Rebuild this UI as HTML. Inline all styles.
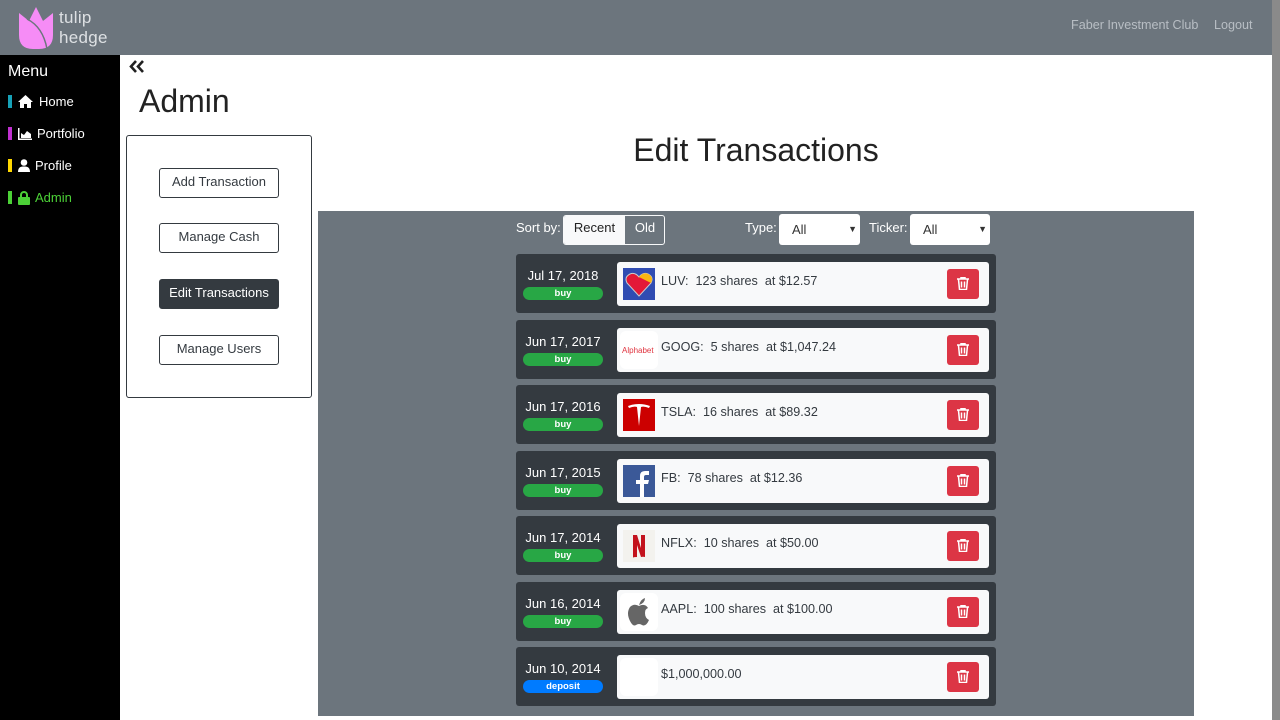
<!DOCTYPE html>
<html><head><style>
*{box-sizing:border-box;margin:0;padding:0}
body{width:1280px;height:720px;overflow:hidden;font-family:"Liberation Sans",sans-serif;background:#fff;position:relative}
.a{position:absolute}
#hdr{left:0;top:0;width:1272px;height:55px;background:#6c757d}
#sb{left:1272px;top:0;width:8px;height:720px;background:#8a8a8a}
#side{left:0;top:55px;width:120px;height:665px;background:#000}
.nav{position:absolute;left:8px;font-size:13px;color:#fff;display:flex;align-items:center}
.nav .bar{width:4px;height:13px;margin-right:6px}
.btn{position:absolute;left:159px;width:120px;height:30px;border:1px solid #343a40;border-radius:3px;font-size:13px;color:#343a40;text-align:center;line-height:26px}
.row{position:absolute;left:516px;width:480px;height:59px;background:#343a40;border-radius:3px}
.date{position:absolute;left:7px;width:80px;top:14px;text-align:center;color:#fff;font-size:13px}
.badge{position:absolute;left:7px;width:80px;top:33px;height:13px;border-radius:7px;background:#28a745;color:#fff;font-size:9.5px;font-weight:bold;text-align:center;line-height:13px}
.card{position:absolute;left:101px;top:8px;width:372px;height:44px;background:#f8f9fa;border-radius:3px}
.logo{position:absolute;left:3px;top:3px;width:38px;height:38px;background:#fff;border-radius:6px;overflow:hidden}
.txt{position:absolute;left:44px;top:12px;font-size:12.6px;color:#343a40;white-space:pre}
.del{position:absolute;left:330px;top:7px;width:32px;height:30px;background:#dc3545;border-radius:3px}
.del svg{position:absolute;left:10px;top:8px}
</style></head><body>
<div class="a" id="hdr"></div>
<div class="a" id="sb"></div>
<svg class="a" style="left:17px;top:5px" width="38" height="45" viewBox="0 0 38 45">
<path d="M2 8 L12 16 L19 2 L26 16 L36 8 L36 30 Q36 44 22 44 L16 44 Q2 44 2 30 Z" fill="#f68cf6"/>
<path d="M10 14 Q26 22 30 44" stroke="#6c757d" stroke-width="1.5" fill="none"/>
</svg>
<div class="a" style="left:59px;top:8px;font-size:17px;color:#dde0e3;line-height:20px;letter-spacing:0.3px">tulip<br>hedge</div>
<div class="a" style="left:1071px;top:18px;font-size:12.6px;color:#b8bec4">Faber Investment Club</div>
<div class="a" style="left:1214px;top:18px;font-size:12.6px;color:#b8bec4">Logout</div>

<div class="a" id="side"></div>
<div class="a" style="left:8px;top:63px;font-size:16px;color:#fff">Menu</div>
<div class="nav" style="top:94px"><span class="bar" style="background:#17a2b8"></span><svg width="15" height="13" viewBox="0 0 15 13"><path d="M7.5 0 L15 7 L13 7 L13 13 L9 13 L9 9 L6 9 L6 13 L2 13 L2 7 L0 7 Z" fill="#fff"/></svg><span style="margin-left:6px">Home</span></div>
<div class="nav" style="top:126px"><span class="bar" style="background:#c030d0"></span><svg width="14" height="12" viewBox="0 0 14 12"><path d="M0 0V12H14V10.5H1.5V0Z M3 10 L3 5 L6 7 L9 3 L13 6 L13 10Z" fill="#fff"/></svg><span style="margin-left:5px">Portfolio</span></div>
<div class="nav" style="top:158px"><span class="bar" style="background:#ffd700"></span><svg width="12" height="13" viewBox="0 0 12 13"><circle cx="6" cy="3.5" r="3.3" fill="#fff"/><path d="M0 13 Q0 7 6 7.5 Q12 7 12 13Z" fill="#fff"/></svg><span style="margin-left:5px">Profile</span></div>
<div class="nav" style="top:190px;color:#4cd137"><span class="bar" style="background:#4cd137"></span><svg width="12" height="14" viewBox="0 0 12 14"><path d="M3 6V4A3 3 0 0 1 9 4V6" stroke="#4cd137" stroke-width="2" fill="none"/><rect x="0" y="6" width="12" height="8" rx="1" fill="#4cd137"/></svg><span style="margin-left:5px">Admin</span></div>

<svg class="a" style="left:129px;top:60px" width="16" height="13" viewBox="0 0 16 13"><path d="M7 1L2 6.5L7 12M14 1L9 6.5L14 12" stroke="#222" stroke-width="2.6" fill="none"/></svg>
<div class="a" style="left:139px;top:83px;font-size:32px;color:#222">Admin</div>
<div class="a" style="left:126px;top:135px;width:186px;height:263px;border:1px solid #343a40;border-radius:3px"></div>
<div class="btn" style="top:168px">Add Transaction</div>
<div class="btn" style="top:223px">Manage Cash</div>
<div class="btn" style="top:279px;background:#343a40;color:#fff">Edit Transactions</div>
<div class="btn" style="top:335px">Manage Users</div>

<div class="a" style="left:318px;top:132px;width:876px;text-align:center;font-size:32px;color:#222">Edit Transactions</div>
<div class="a" style="left:318px;top:211px;width:876px;height:505px;background:#6c757d"></div>
<div class="a" style="left:516px;top:220px;font-size:13px;color:#fff">Sort by:</div>
<div class="a" style="left:563px;top:215px;width:102px;height:30px;border:1px solid #f8f9fa;border-radius:3px;overflow:hidden;font-size:13px">
<div class="a" style="left:0;top:0;width:61px;height:28px;background:#f8f9fa;color:#222;text-align:center;line-height:23px">Recent</div>
<div class="a" style="left:61px;top:0;width:40px;height:28px;color:#fff;text-align:center;line-height:23px">Old</div></div>
<div class="a" style="left:745px;top:220px;font-size:13px;color:#fff">Type:</div>
<div class="a" style="left:779px;top:214px;width:81px;height:31px;background:#fff;border-radius:3px;font-size:13px;color:#333;padding:8px 13px">All<span style="position:absolute;right:3px;top:10px;font-size:9px">▼</span></div>
<div class="a" style="left:869px;top:220px;font-size:13px;color:#fff">Ticker:</div>
<div class="a" style="left:910px;top:214px;width:80px;height:31px;background:#fff;border-radius:3px;font-size:13px;color:#333;padding:8px 13px">All<span style="position:absolute;right:3px;top:10px;font-size:9px">▼</span></div>

<div class="row" style="top:254px"><div class="date">Jul 17, 2018</div><div class="badge">buy</div><div class="card"><div class="logo" style="background:#304cb2;width:32px;height:32px;left:6px;top:6px;border-radius:0"><svg width="32" height="32" viewBox="0 0 32 32"><path d="M16 28 L4 15 Q1 9 7 6 Q12 4 16 9 Q20 4 25 6 Q31 9 28 15 Z" fill="#e31837" stroke="#ccc" stroke-width="1"/><path d="M16 9 Q20 4 25 6 Q31 9 28 15Z" fill="#f9b612"/></svg></div><div class="txt">LUV:  123 shares  at $12.57</div><div class="del"><svg width="12" height="13" viewBox="0 0 12 13"><path d="M0 2H12M4 2V0.5H8V2M1.5 2.5L2.5 12.5H9.5L10.5 2.5M4.5 4.5V10.5M7.5 4.5V10.5" stroke="#fff" stroke-width="1.5" fill="none"/></svg></div></div></div>
<div class="row" style="top:320px"><div class="date">Jun 17, 2017</div><div class="badge">buy</div><div class="card"><div class="logo"><span style="position:absolute;left:2px;top:15px;font-size:8px;color:#e0343f">Alphabet</span></div><div class="txt">GOOG:  5 shares  at $1,047.24</div><div class="del"><svg width="12" height="13" viewBox="0 0 12 13"><path d="M0 2H12M4 2V0.5H8V2M1.5 2.5L2.5 12.5H9.5L10.5 2.5M4.5 4.5V10.5M7.5 4.5V10.5" stroke="#fff" stroke-width="1.5" fill="none"/></svg></div></div></div>
<div class="row" style="top:385px"><div class="date">Jun 17, 2016</div><div class="badge">buy</div><div class="card"><div class="logo" style="background:#cc0000;width:32px;height:32px;left:6px;top:6px;border-radius:0"><svg width="32" height="32" viewBox="0 0 32 32"><path d="M5 7 Q16 3 27 7 L26 9 Q21 7 18 8 L16 27 L14 8 Q11 7 6 9Z" fill="#fff"/></svg></div><div class="txt">TSLA:  16 shares  at $89.32</div><div class="del"><svg width="12" height="13" viewBox="0 0 12 13"><path d="M0 2H12M4 2V0.5H8V2M1.5 2.5L2.5 12.5H9.5L10.5 2.5M4.5 4.5V10.5M7.5 4.5V10.5" stroke="#fff" stroke-width="1.5" fill="none"/></svg></div></div></div>
<div class="row" style="top:451px"><div class="date">Jun 17, 2015</div><div class="badge">buy</div><div class="card"><div class="logo" style="background:#3b5998;width:32px;height:32px;left:6px;top:6px;border-radius:0"><svg width="32" height="32" viewBox="0 0 32 32"><path d="M17 32V19H13V15H17V11Q17 6 22 6H26V10H23Q21 10 21 12V15H26L25 19H21V32Z" fill="#fff"/></svg></div><div class="txt">FB:  78 shares  at $12.36</div><div class="del"><svg width="12" height="13" viewBox="0 0 12 13"><path d="M0 2H12M4 2V0.5H8V2M1.5 2.5L2.5 12.5H9.5L10.5 2.5M4.5 4.5V10.5M7.5 4.5V10.5" stroke="#fff" stroke-width="1.5" fill="none"/></svg></div></div></div>
<div class="row" style="top:516px"><div class="date">Jun 17, 2014</div><div class="badge">buy</div><div class="card"><div class="logo" style="background:#f3f2ee;width:32px;height:32px;left:6px;top:6px;border-radius:0"><svg width="32" height="32" viewBox="0 0 32 32"><path d="M10 5H14L18 18V5H22V27Q20 26.5 18 27L14 15V27Q12 27 10 27.5Z" fill="#c3121c"/></svg></div><div class="txt">NFLX:  10 shares  at $50.00</div><div class="del"><svg width="12" height="13" viewBox="0 0 12 13"><path d="M0 2H12M4 2V0.5H8V2M1.5 2.5L2.5 12.5H9.5L10.5 2.5M4.5 4.5V10.5M7.5 4.5V10.5" stroke="#fff" stroke-width="1.5" fill="none"/></svg></div></div></div>
<div class="row" style="top:582px"><div class="date">Jun 16, 2014</div><div class="badge">buy</div><div class="card"><div class="logo"><svg width="38" height="38" viewBox="0 0 38 38"><path d="M19 12 Q21 6 25 5 Q25 10 19 12Z" fill="#666"/><path d="M19 13 Q14 10 10 14 Q6 20 10 28 Q13 34 16 32 Q19 30 22 32 Q26 34 29 27 Q25 25 25 20 Q25 16 28 15 Q25 10 19 13Z" fill="#666"/></svg></div><div class="txt">AAPL:  100 shares  at $100.00</div><div class="del"><svg width="12" height="13" viewBox="0 0 12 13"><path d="M0 2H12M4 2V0.5H8V2M1.5 2.5L2.5 12.5H9.5L10.5 2.5M4.5 4.5V10.5M7.5 4.5V10.5" stroke="#fff" stroke-width="1.5" fill="none"/></svg></div></div></div>
<div class="row" style="top:647px"><div class="date">Jun 10, 2014</div><div class="badge" style="background:#007bff">deposit</div><div class="card"><div class="logo"></div><div class="txt">$1,000,000.00</div><div class="del"><svg width="12" height="13" viewBox="0 0 12 13"><path d="M0 2H12M4 2V0.5H8V2M1.5 2.5L2.5 12.5H9.5L10.5 2.5M4.5 4.5V10.5M7.5 4.5V10.5" stroke="#fff" stroke-width="1.5" fill="none"/></svg></div></div></div>
</body></html>
